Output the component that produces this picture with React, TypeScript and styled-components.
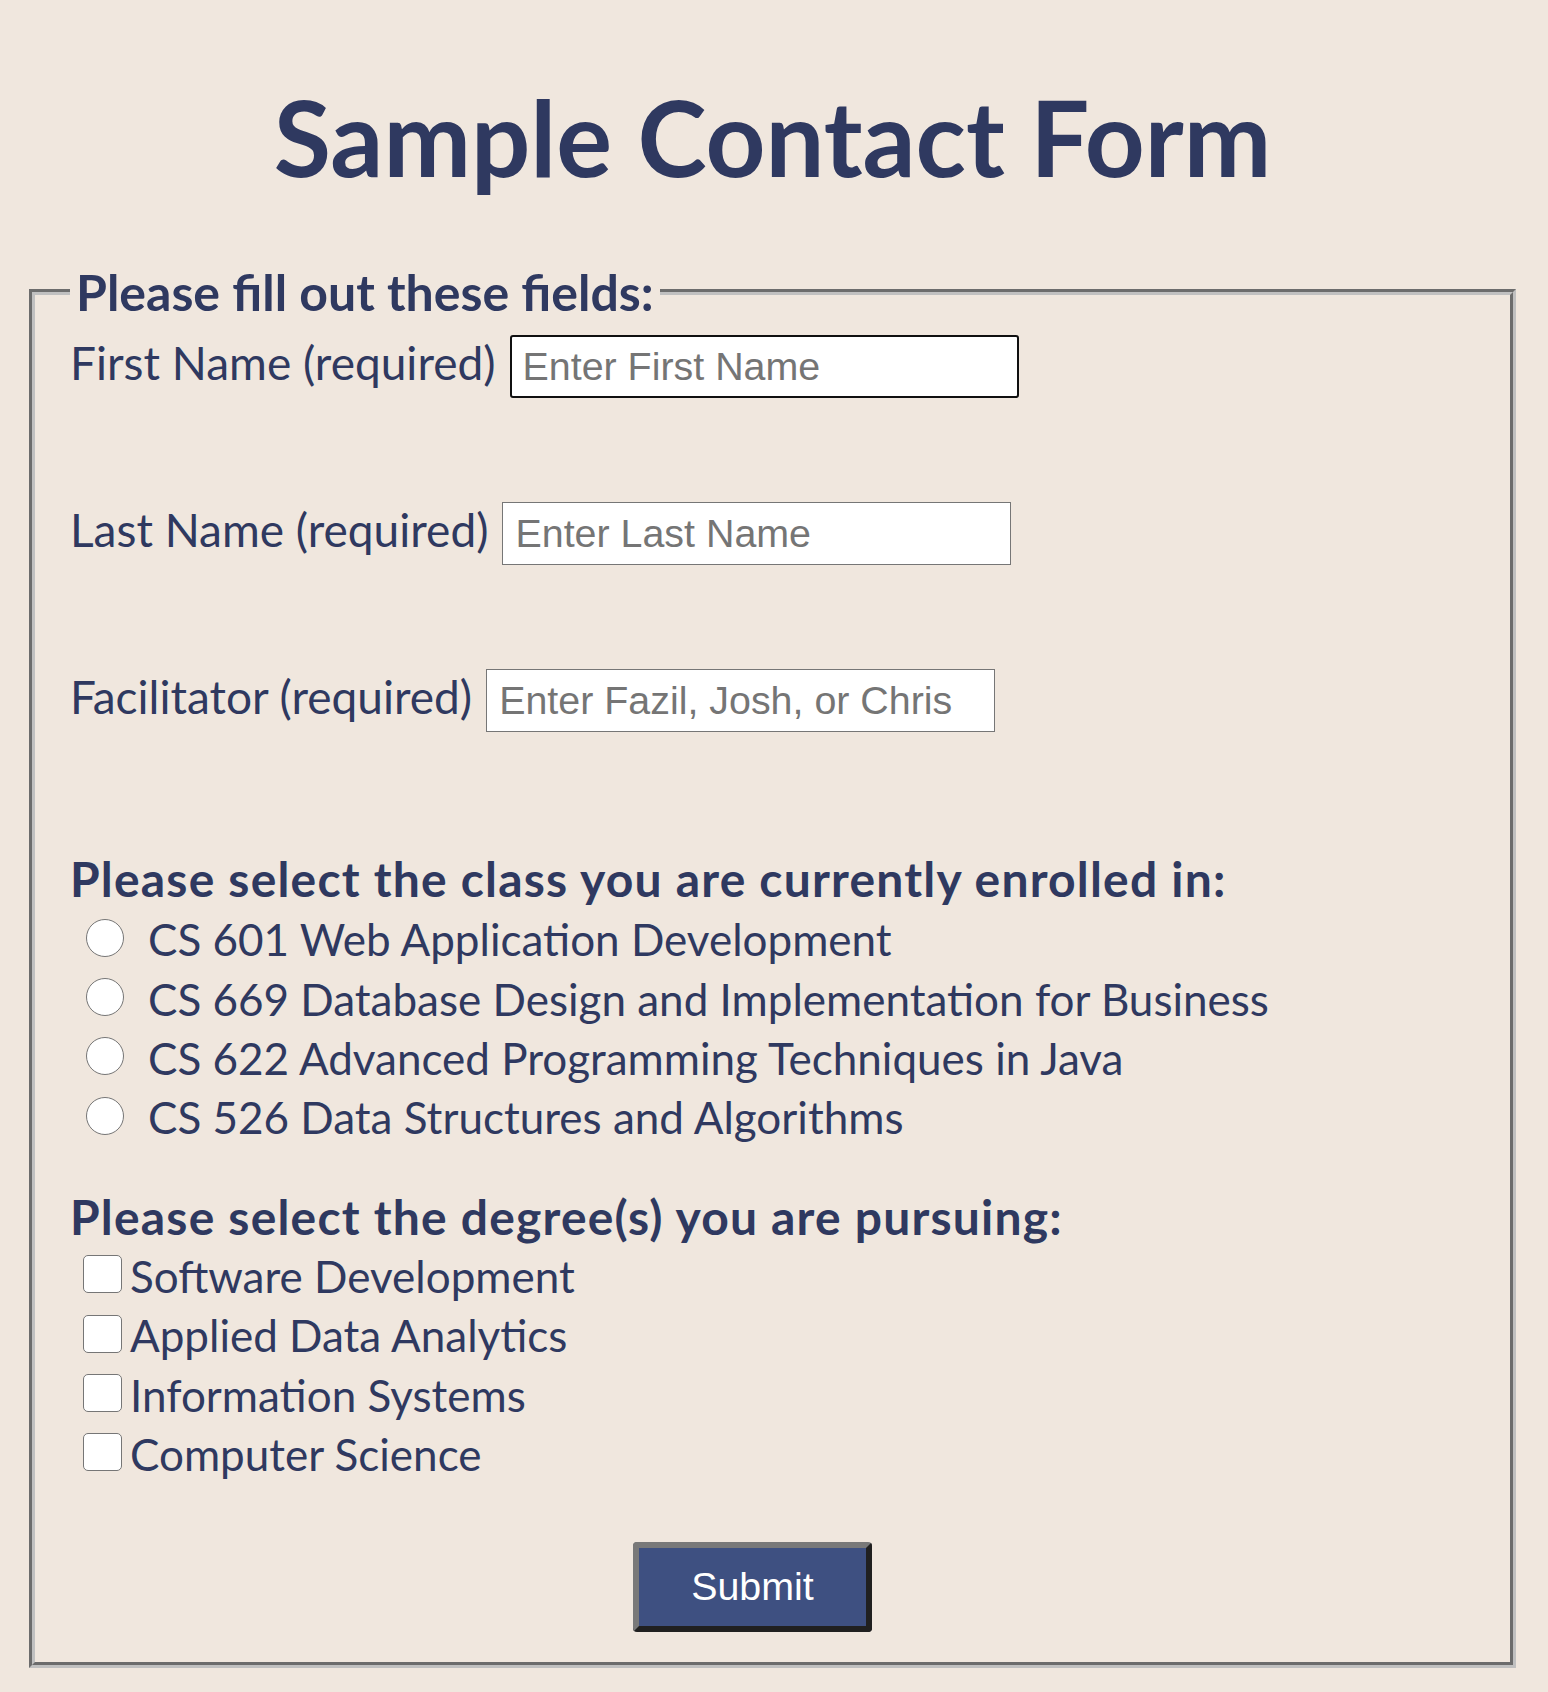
import React from 'react'
import styled, { createGlobalStyle, css } from 'styled-components'

const GlobalStyle = createGlobalStyle`
  html, body {
    margin: 0;
    padding: 0;
    background: #f0e7de;
  }
  body {
    font-family: Lato, 'Open Sans', sans-serif;
    color: #2f3960;
  }
`

const Page = styled.div`
    padding: 74px 32px 25px 29px;
`

const Title = styled.h1`
    margin: 0 0 64px;
    text-align: center;
    font-size: 104.5px;
    font-weight: 700;
    line-height: 1.2;
`

const Fieldset = styled.fieldset`
    margin: 0;
    min-width: 0;
    padding: 14px 36px 30px 35px;
    border: 6px groove #c0c0c0;
`

const Legend = styled.legend`
    padding: 0 6px;
    font-size: 50px;
    font-weight: 700;
    line-height: 58px;
`

const Fields = styled.div`
    display: flex;
    flex-direction: column;
    gap: 104px;
`

const Field = styled.div`
    display: flex;
    align-items: baseline;
    gap: 14px;
`

const Label = styled.label`
    font-size: 46px;
    line-height: 1.2;
    white-space: nowrap;
`

const TextInput = styled.input<{ $active?: boolean }>`
    box-sizing: border-box;
    width: 509px;
    height: 63px;
    padding: 8px 12px;
    border: 1px solid #767676;
    border-radius: 0;
    background: #fff;
    color: #000;
    font-family: 'Liberation Sans', Arial, sans-serif;
    font-size: 39.4px;
    outline: none;
    &::placeholder {
        color: #757575;
    }
    ${(p) => p.$active && css`
        border: 2px solid #101010;
        border-radius: 3px;
        padding: 7px 11px;
    `}
`

const Question = styled.p<{ $top: number }>`
    margin: ${(p) => p.$top}px 0 0;
    font-size: 48px;
    font-weight: 700;
    letter-spacing: 1.2px;
    line-height: 1.2;
`

const Options = styled.div<{ $indent: number; $top: number }>`
    display: flex;
    flex-direction: column;
    margin-top: ${(p) => p.$top}px;
    padding-left: ${(p) => p.$indent}px;
`

const Option = styled.label<{ $gap: number }>`
    display: flex;
    align-items: center;
    gap: ${(p) => p.$gap}px;
    height: 59.3px;
    font-size: 44px;
    line-height: 1.2;
    white-space: nowrap;
`

const Radio = styled.input`
    appearance: none;
    flex: none;
    box-sizing: border-box;
    width: 38px;
    height: 38px;
    margin: 0 0 4px;
    border: 1px solid #767676;
    border-radius: 50%;
    background: #fff;
`

const Checkbox = styled.input`
    appearance: none;
    flex: none;
    box-sizing: border-box;
    width: 39px;
    height: 38px;
    margin: 0 0 4px;
    border: 1px solid #767676;
    border-radius: 5px;
    background: #fff;
`

const Submit = styled.button`
    display: block;
    box-sizing: border-box;
    width: 239px;
    height: 90px;
    margin: 58px 0 0 563px;
    padding: 0;
    border: 6px solid;
    border-color: #797979 #202020 #202020 #797979;
    border-radius: 4px;
    background: #3e5081;
    color: #fff;
    font-family: 'Liberation Sans', Arial, sans-serif;
    font-size: 39.4px;
`

const classes = [
    'CS 601 Web Application Development',
    'CS 669 Database Design and Implementation for Business',
    'CS 622 Advanced Programming Techniques in Java',
    'CS 526 Data Structures and Algorithms',
]

const degrees = [
    'Software Development',
    'Applied Data Analytics',
    'Information Systems',
    'Computer Science',
]

export default function App() {
    return (
        <>
            <GlobalStyle />
            <Page>
                <Title>Sample Contact Form</Title>
                <form onSubmit={(e) => e.preventDefault()}>
                    <Fieldset>
                        <Legend>Please fill out these fields:</Legend>
                        <Fields>
                            <Field>
                                <Label htmlFor='first'>First Name (required)</Label>
                                <TextInput id='first' $active placeholder='Enter First Name' />
                            </Field>
                            <Field>
                                <Label htmlFor='last'>Last Name (required)</Label>
                                <TextInput id='last' placeholder='Enter Last Name' />
                            </Field>
                            <Field>
                                <Label htmlFor='fac'>Facilitator (required)</Label>
                                <TextInput id='fac' placeholder='Enter Fazil, Josh, or Chris' />
                            </Field>
                        </Fields>

                        <Question $top={118}>Please select the class you are currently enrolled in:</Question>
                        <Options $indent={16} $top={2}>
                            {classes.map((c) => (
                                <Option key={c} $gap={24}>
                                    <Radio type='radio' name='class' value={c} />
                                    {c}
                                </Option>
                            ))}
                        </Options>

                        <Question $top={41}>Please select the degree(s) you are pursuing:</Question>
                        <Options $indent={13} $top={1}>
                            {degrees.map((d) => (
                                <Option key={d} $gap={8}>
                                    <Checkbox type='checkbox' name='degree' value={d} />
                                    {d}
                                </Option>
                            ))}
                        </Options>

                        <Submit type='submit'>Submit</Submit>
                    </Fieldset>
                </form>
            </Page>
        </>
    )
}
